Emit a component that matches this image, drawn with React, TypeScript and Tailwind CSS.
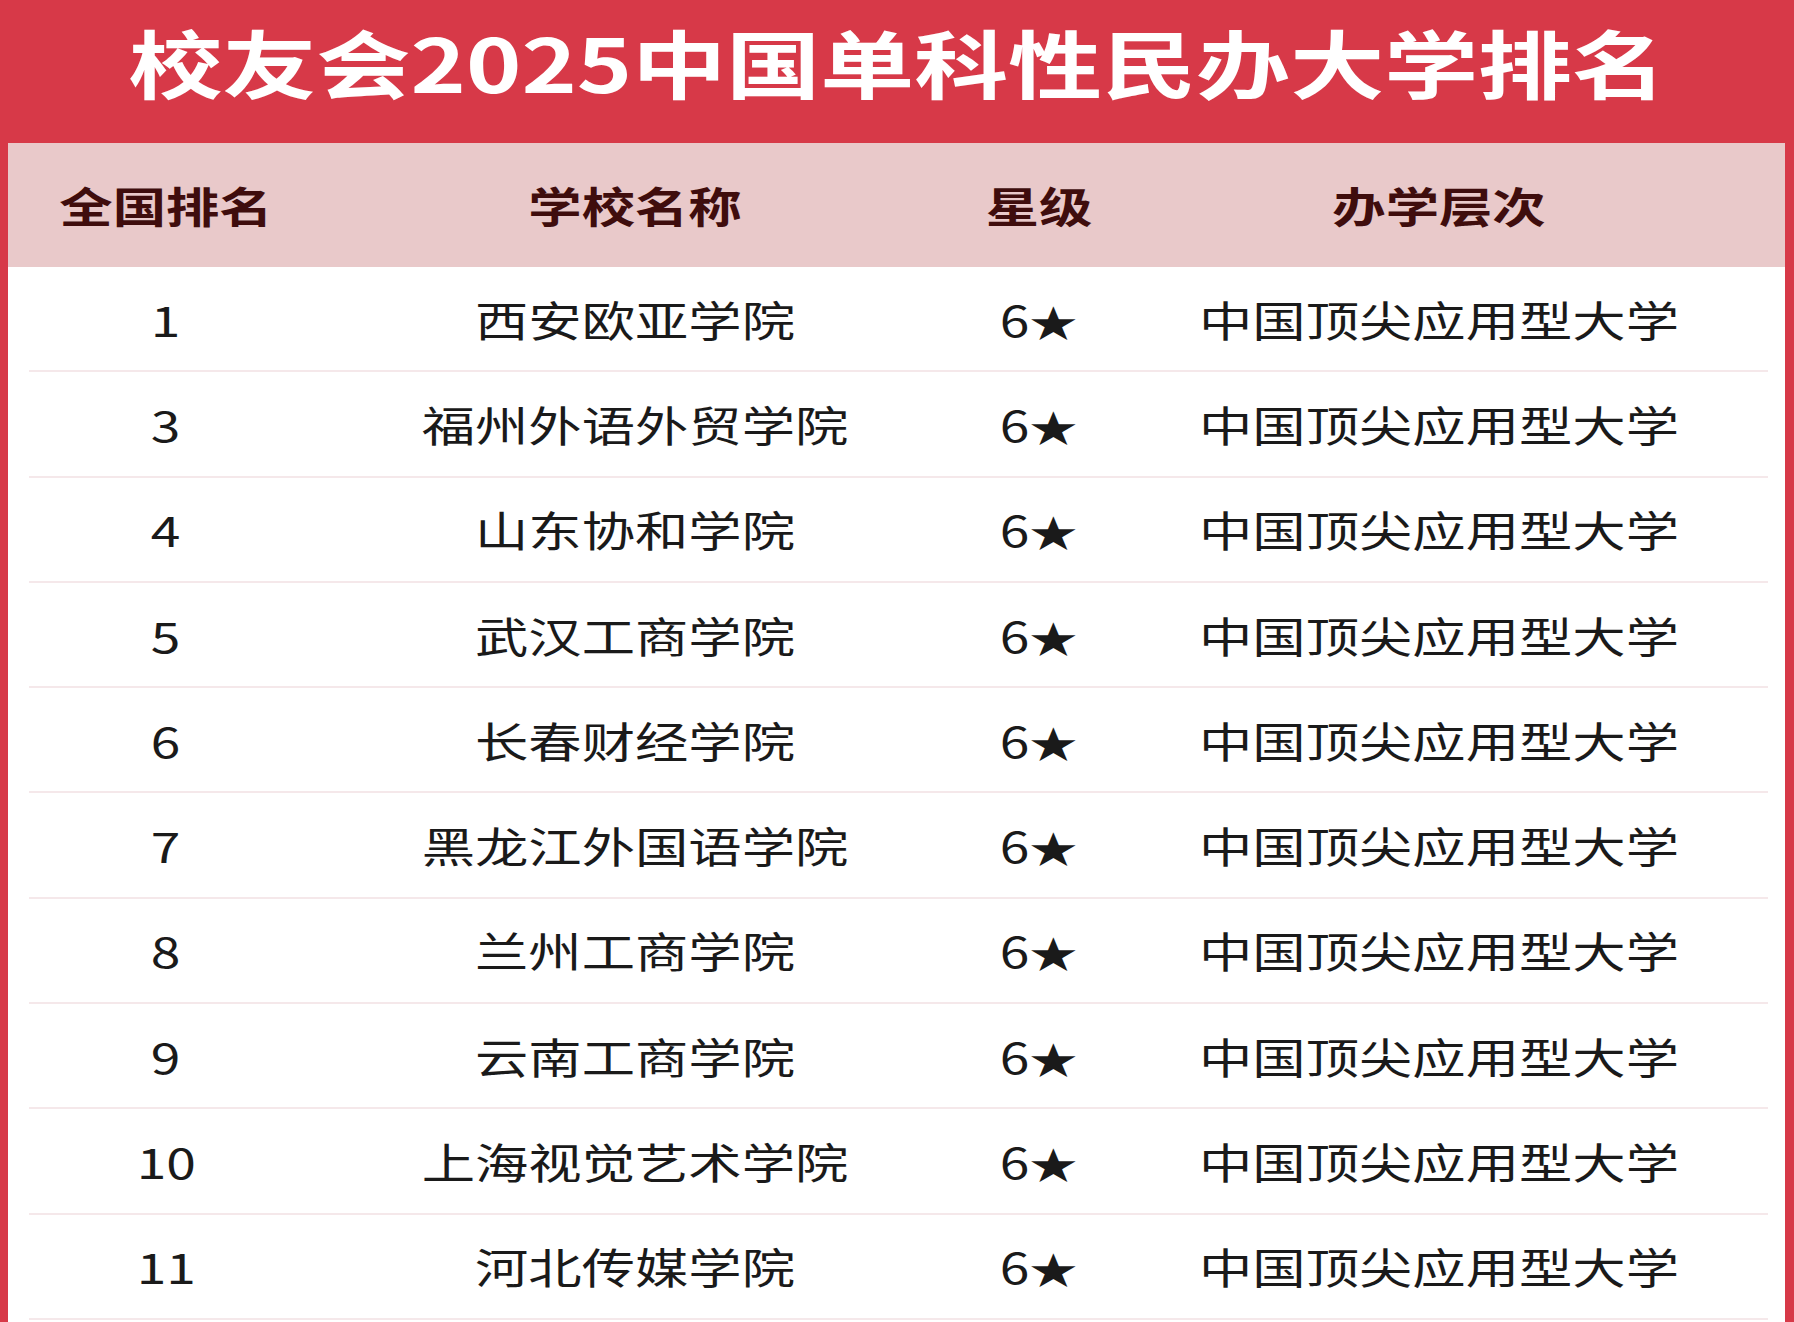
import React from "react";

const rows: { rank: string; name: string }[] = [
  { rank: "1", name: "西安欧亚学院" },
  { rank: "3", name: "福州外语外贸学院" },
  { rank: "4", name: "山东协和学院" },
  { rank: "5", name: "武汉工商学院" },
  { rank: "6", name: "长春财经学院" },
  { rank: "7", name: "黑龙江外国语学院" },
  { rank: "8", name: "兰州工商学院" },
  { rank: "9", name: "云南工商学院" },
  { rank: "10", name: "上海视觉艺术学院" },
  { rank: "11", name: "河北传媒学院" },
];

function Cell({ children, bold }: { children: React.ReactNode; bold?: boolean }) {
  return (
    <div className="flex items-center justify-center">
      <span
        className={
          "inline-block scale-x-[1.27] whitespace-nowrap leading-none " +
          (bold ? "font-bold" : "font-normal")
        }
      >
        {children}
      </span>
    </div>
  );
}

export default function App() {
  return (
    <div
      className="w-[1794px] min-h-[1322px] bg-[#d73948] flex flex-col"
      style={{ fontFamily: '"Noto Sans CJK SC", "Noto Sans", sans-serif' }}
    >
      <div className="h-[143px] flex items-center justify-center pb-[22px]">
        <h1 className="inline-block scale-x-[1.27] text-[74px] font-bold leading-none text-white whitespace-nowrap">
          校友会2025中国单科性民办大学排名
        </h1>
      </div>
      <div className="ml-[8px] mr-[9px] flex-1 bg-white flex flex-col">
        <div className="h-[124px] bg-[#e9c9ca] pl-[21px] pr-[17px] grid grid-cols-[274px_664px_144px_1fr] text-[42px] text-[#3f0d0d]">
          <Cell bold>全国排名</Cell>
          <Cell bold>学校名称</Cell>
          <Cell bold>星级</Cell>
          <Cell bold>办学层次</Cell>
        </div>
        <div className="pl-[21px] pr-[17px] flex flex-col">
          {rows.map((r) => (
            <div
              key={r.rank}
              className="h-[105.3px] border-b-2 border-[#f5e8ea] grid grid-cols-[274px_664px_144px_1fr] text-[42px] text-[#1a1a1a]"
            >
              <Cell>{r.rank}</Cell>
              <Cell>{r.name}</Cell>
              <Cell>
                6<span className="text-[38px]">★</span>
              </Cell>
              <Cell>中国顶尖应用型大学</Cell>
            </div>
          ))}
        </div>
      </div>
    </div>
  );
}
